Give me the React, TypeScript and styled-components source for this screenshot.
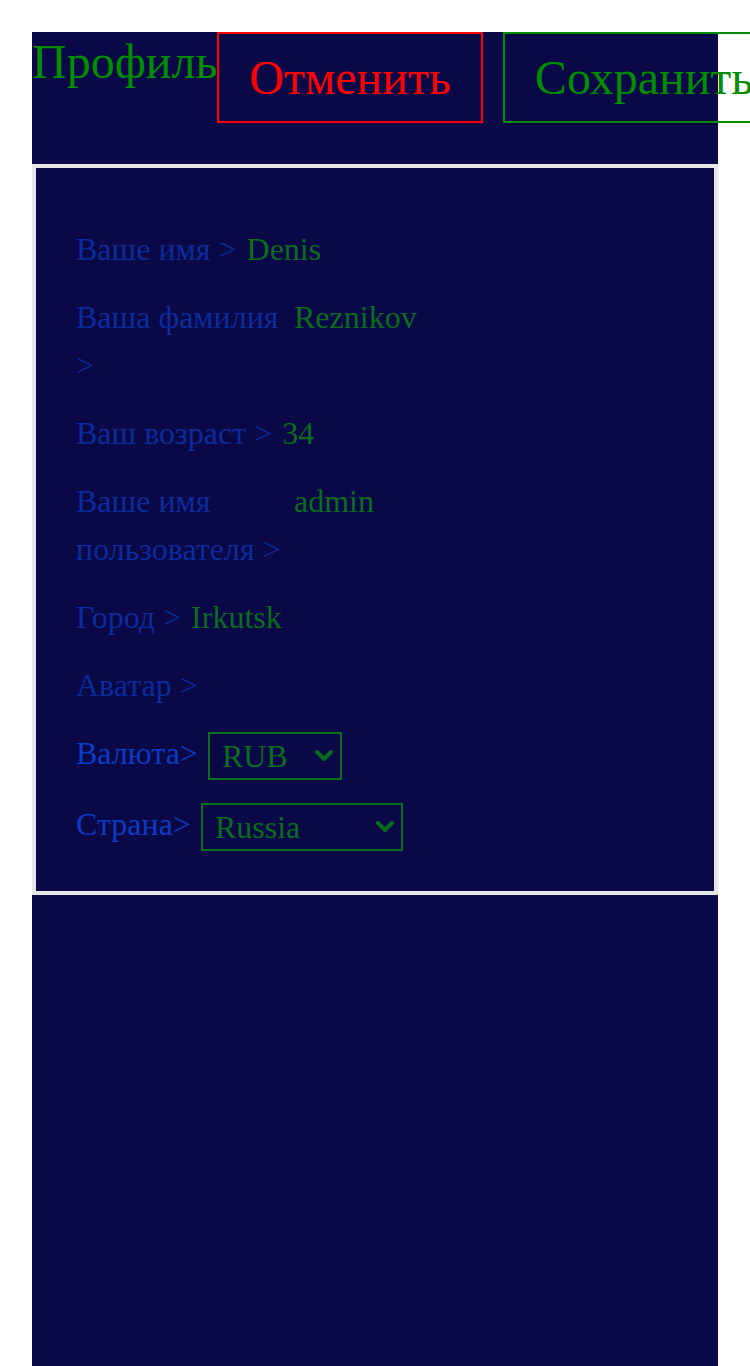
import React, { useState } from 'react';
import styled, { createGlobalStyle } from 'styled-components';

const GlobalStyle = createGlobalStyle`
    body {
        margin: 0;
        background: #ffffff;
        font-family: "Liberation Serif", "Times New Roman", serif;
    }
`

const Page = styled.div`
    padding: 32px 32px 0;
`

const Main = styled.main`
    background: #0a0846;
    min-height: calc(100vh - 32px);
`

const Header = styled.div`
    display: flex;
    align-items: flex-start;
    height: 132px;
`

const Title = styled.div`
    font-size: 48px;
    color: #008c00;
    padding-top: 2px;
    white-space: nowrap;
    flex-shrink: 0;
`

const Button = styled.button<{ $color: string; $offset?: number }>`
    flex-shrink: 0;
    white-space: nowrap;
    margin: 0 0 0 ${p => p.$offset || 0}px;
    padding: 16px 30px;
    font-family: inherit;
    font-size: 48px;
    background: transparent;
    color: ${p => p.$color};
    border: 2px solid ${p => p.$color};
    cursor: pointer;
`

const Card = styled.div`
    border: 4px solid #e6e6e6;
    padding: 57px 40px 40px;
    display: flex;
    flex-direction: column;
    gap: 20px;
`

const Row = styled.div`
    display: flex;
    align-items: flex-start;
    gap: 10px;
    font-size: 32px;
    line-height: 48px;
`

const Label = styled.span<{ $bright?: boolean }>`
    max-width: 208px;
    color: ${p => p.$bright ? '#0a3cc6' : '#0b2c9c'};
`

const Value = styled.span`
    color: #0a6c1c;
`

const SelectWrap = styled.span`
    position: relative;
    display: inline-flex;
    margin-top: 3px;
`

const Select = styled.select`
    appearance: none;
    height: 48px;
    padding: 0 52px 0 12px;
    font-family: inherit;
    font-size: 32px;
    color: #0a6c1c;
    background: #0a0846;
    border: 2px solid #0a6c1c;
    border-radius: 0;
    cursor: pointer;
`

const Chevron = styled.svg`
    position: absolute;
    right: 9px;
    top: 50%;
    width: 18px;
    height: 12px;
    transform: translateY(-50%);
    pointer-events: none;
`

const fields = [
    { label: 'Ваше имя >', value: 'Denis' },
    { label: 'Ваша фамилия >', value: 'Reznikov' },
    { label: 'Ваш возраст >', value: '34' },
    { label: 'Ваше имя пользователя >', value: 'admin' },
    { label: 'Город >', value: 'Irkutsk' },
    { label: 'Аватар >', value: '' },
]

const Dropdown = ({ value, options, onChange }: { value: string; options: string[]; onChange: (v: string) => void }) => (
    <SelectWrap>
        <Select value={value} onChange={e => onChange(e.target.value)}>
            {options.map(o => <option key={o}>{o}</option>)}
        </Select>
        <Chevron viewBox="0 0 18 12">
            <path d="M2 2 L9 9 L16 2" fill="none" stroke="#0a6c1c" strokeWidth="4" strokeLinecap="round" strokeLinejoin="round" />
        </Chevron>
    </SelectWrap>
)

export default function App() {
    const [currency, setCurrency] = useState('RUB')
    const [country, setCountry] = useState('Russia')

    return (
        <Page>
            <GlobalStyle />
            <Main>
                <Header>
                    <Title>Профиль</Title>
                    <Button $color="#ff0000">Отменить</Button>
                    <Button $color="#008c00" $offset={20}>Сохранить</Button>
                </Header>
                <Card>
                    {fields.map(f => (
                        <Row key={f.label}>
                            <Label>{f.label}</Label>
                            {f.value && <Value>{f.value}</Value>}
                        </Row>
                    ))}
                    <Row>
                        <Label $bright>Валюта&gt;</Label>
                        <Dropdown value={currency} onChange={setCurrency} options={['RUB', 'EUR', 'USD']} />
                    </Row>
                    <Row>
                        <Label $bright>Страна&gt;</Label>
                        <Dropdown value={country} onChange={setCountry} options={['Russia', 'Belarus', 'Ukraine', 'Kazahstan', 'Armenia']} />
                    </Row>
                </Card>
            </Main>
        </Page>
    );
}
